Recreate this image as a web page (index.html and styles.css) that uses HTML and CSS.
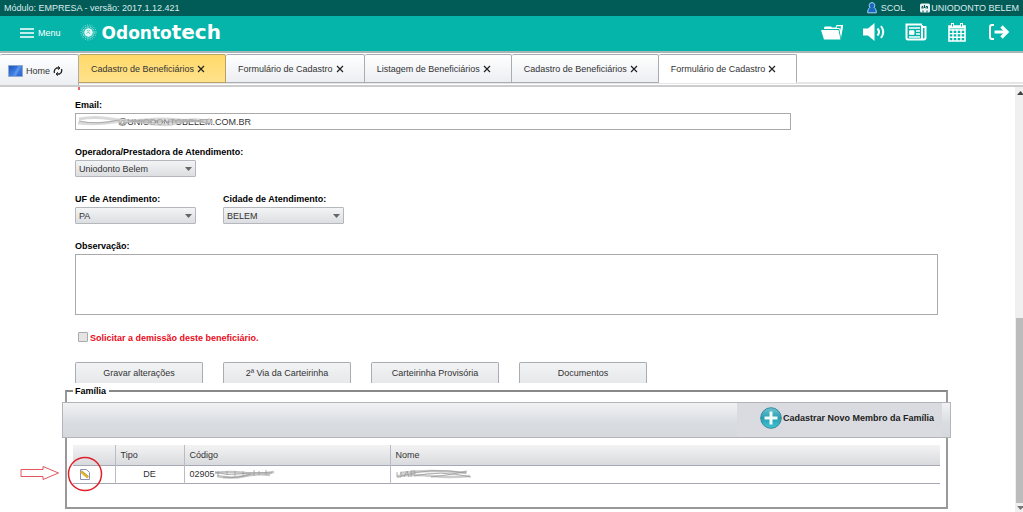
FILE: index.html
```html
<!DOCTYPE html>
<html lang="pt-BR">
<head>
<meta charset="utf-8">
<title>Odontotech</title>
<link rel="stylesheet" href="styles.css">
</head>
<body>
<div class="topbar">
  <span>Módulo: EMPRESA - versão: 2017.1.12.421</span>
  <div class="account">
    <span class="account-item">
      <svg width="10" height="12" viewBox="0 0 10 12"><path d="M5 .6a2.700 2.700 0 0 1 2 4.600C8.600 6.500 9.300 8.400 9.300 10.800H.7C.7 8.400 1.400 6.500 3 5.200A2.700 2.700 0 0 1 5 .6Z" fill="#1767c0" stroke="#a9d6f2"/></svg>
      SCOL
    </span>
    <span class="account-item tight">
      <svg width="10" height="10" viewBox="0 0 10 10"><rect y=".5" width="10" height="9" rx="1.500" fill="#e8f3f2"/><path d="M2 5.500V3.500h1v2M4.500 2v3M6 5.500V3.500h1.500v2M3 7.500v2M7 7.500v2" stroke="#01504c" fill="none"/></svg>
      UNIODONTO BELEM
    </span>
  </div>
</div>
<header class="header">
  <button class="menu" type="button">
    <svg width="14" height="10" viewBox="0 0 14 10"><path d="M0 1h14M0 5h14M0 9h14" stroke="#fff" stroke-width="1.600"/></svg>
    Menu
  </button>
  <div class="brand">
    <svg width="17" height="17" viewBox="0 0 17 17" fill="none" stroke="#fff"><circle cx="8.500" cy="8.500" r="7.500" stroke-dasharray="1 1.400" opacity=".6"/><circle cx="8.500" cy="8.500" r="5.600" stroke-dasharray="2 .7" opacity=".7"/><circle cx="8.500" cy="8.500" r="4.300" fill="#e5f8f6" stroke="none"/><path d="M7 6.500q1.500 1 3 0M6.800 9.500l1.500-1.500 2 2" stroke="#05b5aa" stroke-width=".6"/></svg>
    <span class="wordmark">Odonto<span class="wordmark-tail">tech</span></span>
  </div>
  <nav class="actions">
    <button type="button" aria-label="Pasta"><svg width="24" height="20" viewBox="0 0 24 20" fill="#fff"><path d="M1 8h17.500l2 9.500H4Z"/><path d="M4 7V5.500L5 4.500h6l1 1h3.500L16.500 3h6.500v2l-2 11L19.300 7Z"/><path d="M16.800 4.200h4.200L20.300 8l-.8-2h-2.700Z" fill="#05b5aa"/><path d="M3 7.500h16" stroke="#05b5aa" stroke-width=".6"/></svg></button>
    <button type="button" aria-label="Avisos"><svg width="24" height="20" viewBox="0 0 24 20" fill="#fff"><path d="M1 6.500h5L12.500 1v18L6 13.500H1Z"/><path d="M15.500 6.500q3 3.500 0 7M19 4q4.500 6 0 12" fill="none" stroke="#fff" stroke-width="2"/></svg></button>
    <button type="button" aria-label="Notícias"><svg width="24" height="20" viewBox="0 0 24 20" fill="none" stroke="#fff" stroke-width="2"><path d="M18 3v13q0 1.500 1.800 1.500 1.700 0 1.700-2V5H18M19 17.500H4q-1.500 0-1.500-1.500V2.500H18"/><path d="M5 6h11M12 9h4M12 12h4M5 15h11" stroke-width="1.500"/><path d="M5.500 8.800h4.500v3.500H5.500Z" fill="#fff" stroke-width="1"/></svg></button>
    <button type="button" aria-label="Calendário"><svg width="24" height="20" viewBox="0 0 24 20" fill="none" stroke="#fff"><path d="M3 4h16v15H3Z" stroke-width="1.600"/><path d="M3 8h16M3 11.600h16M3 15.200h16M7 7v12M11 7v12M15 7v12" stroke-width="1.400"/><path d="M3 4h16v2.500H3Z" fill="#fff" stroke="none"/><path d="M6.500 1v4M15.500 1v4" stroke-width="3"/><path d="M6.500 2v2.500M15.500 2v2.500" stroke="#05b5aa"/></svg></button>
    <button type="button" aria-label="Sair"><svg width="24" height="20" viewBox="0 0 24 20" fill="none" stroke="#fff" stroke-width="2"><path d="M6 3H4Q2 3 2 5v10q0 2 2 2h2"/><path d="M6.500 10h11" stroke-width="3"/><path d="M13.500 4.500 19 10l-5.500 5.500" stroke-width="3.200"/></svg></button>
  </nav>
</header>
<nav class="tabs">
  <button class="tab home" type="button">
    <svg width="15" height="12" viewBox="0 0 15 12"><defs><linearGradient id="scr" x2="1" y2="1"><stop stop-color="#1b52b8"/><stop offset=".55" stop-color="#3f7fe4"/><stop offset="1" stop-color="#2a5fc9"/></linearGradient></defs><path d="M.5.500h14v11H.5Z" fill="url(#scr)" stroke="#8fa9cf"/><path d="m5 11 5-10h3L8 11Z" fill="#78aaf2" opacity=".5"/></svg>
    Home
    <svg width="10" height="10" viewBox="0 0 10 10" fill="none" stroke="#222" stroke-width="1.300"><path d="M1.500 7Q.5 3.500 3.500 2H6M8.500 3q1 3.500-2 5H4"/><path d="m5 .3 2 1.700-2 1.700M5 6.300 3 8l2 1.700" stroke-width="1"/></svg>
  </button>
  <button class="tab marked" type="button">Cadastro de Beneficiários <svg class="x" viewBox="0 0 8 8"><path d="m1 1 6 6M7 1 1 7"/></svg></button>
  <button class="tab" type="button">Formulário de Cadastro <svg class="x" viewBox="0 0 8 8"><path d="m1 1 6 6M7 1 1 7"/></svg></button>
  <button class="tab" type="button">Listagem de Beneficiários <svg class="x" viewBox="0 0 8 8"><path d="m1 1 6 6M7 1 1 7"/></svg></button>
  <button class="tab" type="button">Cadastro de Beneficiários <svg class="x" viewBox="0 0 8 8"><path d="m1 1 6 6M7 1 1 7"/></svg></button>
  <button class="tab active" type="button">Formulário de Cadastro <svg class="x" viewBox="0 0 8 8"><path d="m1 1 6 6M7 1 1 7"/></svg></button>
</nav>
<div class="workspace">
  <form class="form">
    <span class="required"></span>
    <div class="field email">
      <label for="email">Email:</label>
      <div class="smudged">
        <input id="email" type="text" value="@UNIODONTOBELEM.COM.BR">
        <svg class="smudge-email" width="140" height="12" viewBox="0 0 140 12" fill="none"><path d="M2 4q16-3 32 0t34 1 34 0 34 1M1 8q20 2 36-1t34 1 32-1 33 1" stroke="#ccc" stroke-width="3" opacity=".75"/><path d="M2 6q18 4 40-1M45 9q20-6 38-3t50-2M50 5q24 4 44 1t38 3" stroke="#aaa" stroke-width="1"/></svg>
      </div>
    </div>
    <div class="field">
      <label for="operadora">Operadora/Prestadora de Atendimento:</label>
      <div class="select"><select id="operadora"><option>Uniodonto Belem</option></select><svg width="7" height="4" viewBox="0 0 7 4"><path d="M0 0h7L3.500 4Z"/></svg></div>
    </div>
    <div class="columns">
      <div class="field">
        <label for="uf">UF de Atendimento:</label>
        <div class="select"><select id="uf"><option>PA</option></select><svg width="7" height="4" viewBox="0 0 7 4"><path d="M0 0h7L3.500 4Z"/></svg></div>
      </div>
      <div class="field">
        <label for="cidade">Cidade de Atendimento:</label>
        <div class="select"><select id="cidade"><option>BELEM</option></select><svg width="7" height="4" viewBox="0 0 7 4"><path d="M0 0h7L3.500 4Z"/></svg></div>
      </div>
    </div>
    <div class="field">
      <label for="obs">Observação:</label>
      <textarea id="obs"></textarea>
    </div>
    <div class="dismissal">
      <input id="demissao" type="checkbox">
      <label for="demissao">Solicitar a demissão deste beneficiário.</label>
    </div>
    <div class="buttons">
      <button type="button">Gravar alterações</button>
      <button type="button">2ª Via da Carteirinha</button>
      <button type="button">Carteirinha Provisória</button>
      <button type="button">Documentos</button>
    </div>
    <fieldset class="family">
      <legend>Família</legend>
      <div class="toolbar">
        <button class="add" type="button">
          <svg width="22" height="22" viewBox="0 0 22 22"><defs><linearGradient id="ball" x2="0" y2="1"><stop stop-color="#70c3d3"/><stop offset=".5" stop-color="#279db3"/><stop offset="1" stop-color="#43c6d2"/></linearGradient></defs><circle cx="11" cy="11" r="10.300" fill="url(#ball)" stroke="#368b9c"/><path d="M11 4.500v13M4.500 11h13" stroke="#f0fbfc" stroke-width="3"/></svg>
          Cadastrar Novo Membro da Família
        </button>
      </div>
      <table class="members">
        <thead><tr><th class="col-edit"></th><th class="col-type">Tipo</th><th class="col-code">Código</th><th>Nome</th></tr></thead>
        <tbody><tr>
          <td class="edit">
            <button type="button" aria-label="Editar"><svg width="10" height="11" viewBox="0 0 10 11"><path d="M.5.500h6l3 3v7h-9Z" fill="#fff" stroke="#8b91b5"/><path d="m1 2.500 7 6" stroke="#e0b42c" stroke-width="2.600"/><path d="m1.500 1.500 7 6" stroke="#a08b45" stroke-width=".6"/></svg></button>
            <svg class="ring" width="36" height="36" viewBox="0 0 36 36"><circle cx="18" cy="18" r="16.500" fill="none" stroke="#e0202c" stroke-width="1.500"/></svg>
            <svg class="pointer" width="40" height="16" viewBox="0 0 40 16"><path d="M1 4.500h22V1.500L38.500 8 23 14.500V11.500H1Z" fill="#fff" stroke="#e5555d"/></svg>
          </td>
          <td class="type">DE</td>
          <td><span class="smudged">02905<svg width="60" height="12" viewBox="0 0 60 12" fill="none"><path d="M0 5q16-2 30 0t29-1M2 8q14 3 28 0t25-1" stroke="#c4c4c4" stroke-width="2.500"/><path d="M0 4q12 4 24 2t33-1M8 9q14 2 28-3M3 3v5M12 3v4M20 3v5M28 3v5M39 2v6M44 3v4M51 2v5" stroke="#999" stroke-width=".8"/></svg></span></td>
          <td><svg width="78" height="12" viewBox="0 0 78 12" fill="none"><path d="M1 8q18-2 35 0t38 0M4 5q30-4 66 0" stroke="#ccc" stroke-width="2.500"/><path d="M1 4v5h4V4M8 9l3-6 2 6M15 9V3h4v3h-4M5 8q28-9 66-3M18 8q26-6 57 1M35 9q20-2 36-6" stroke="#999" stroke-width=".8"/></svg></td>
        </tr></tbody>
      </table>
    </fieldset>
  </form>
  <div class="scrollbar">
    <svg width="8" height="14" viewBox="0 0 8 14"><path d="m2 8 3.500-4L9 8Z" fill="#444"/></svg>
    <div class="track"><div class="thumb"></div></div>
    <svg width="8" height="9" viewBox="0 0 8 9"><path d="m2 3 3.500 4L9 3Z" fill="#777"/></svg>
  </div>
</div>
</body>
</html>
```
FILE: styles.css
```css
* { box-sizing: border-box; }
body {
  margin: 0;
  height: 100vh;
  display: flex;
  flex-direction: column;
  overflow: hidden;
  background: #fff;
  color: #333;
  font: 9px/12px "Liberation Sans", Arial, sans-serif;
}
button, input, select, textarea { font: inherit; color: inherit; margin: 0; }
button { background: none; border: 0; padding: 0; }
svg { display: block; flex: none; }

.topbar {
  flex: none;
  display: flex;
  justify-content: space-between;
  align-items: center;
  height: 16px;
  padding: 0 4px 1px;
  background: #015c58;
  color: #dcebea;
}
.account { display: flex; gap: 15px; }
.account-item { display: flex; align-items: center; gap: 4px; }
.account-item.tight { gap: 1px; }

.header {
  flex: none;
  display: flex;
  align-items: center;
  height: 37px;
  padding: 0 11px 2px 20px;
  background: #05b5aa;
  border-bottom: 2px solid #a9b5b6;
  color: #fff;
}
.menu { display: flex; align-items: center; gap: 4px; }
.brand { display: flex; align-items: center; gap: 5px; margin-left: 19px; }
.wordmark { font: bold 17px/22px "DejaVu Sans", sans-serif; }
.wordmark-tail { font-size: 20px; }
.actions { display: flex; align-items: center; gap: 18px; margin-left: auto; padding-bottom: 2px; }

.tabs {
  flex: none;
  display: flex;
  align-items: flex-end;
  height: 34px;
  border-bottom: 2px solid #ccc;
  background: linear-gradient(#fff 29px, #e4e6e8 29px, #e4e6e8 31px, #fff 31px);
}
.tab {
  display: flex;
  align-items: center;
  gap: 3px;
  height: 29px;
  margin-bottom: 2px;
  padding: 0 20px 0 12px;
  border: 1px solid #a9adb1;
  border-left-width: 0;
  border-radius: 2px 2px 0 0;
  background: linear-gradient(#fff, #eceef2);
}
.tab.home { height: 31px; margin: 0; padding: 2px 15px 0 8px; border-bottom: 0; }
.tab.marked { background: linear-gradient(#ffd969, #ffe28c); border-color: #b9a164; }
.tab.active { background: #fff; border-bottom-color: #fff; }
.x { width: 8px; height: 8px; stroke: #222; stroke-width: 1.2px; fill: none; }

.workspace { flex: 1; min-height: 0; display: flex; }
.form { flex: 1; min-width: 0; padding: 12px 77px 0 75px; position: relative; }
.required { position: absolute; top: 0; left: 78px; width: 2px; height: 3px; background: #e66; }
.field { margin-bottom: 16px; }
label { color: #000; font-weight: bold; }
.field label { display: block; margin-bottom: 2px; }
.smudged { position: relative; display: block; }
.email input {
  display: block;
  width: 83%;
  height: 17px;
  padding: 0 4px 0 42px;
  border: 1px solid #aaa;
}
.smudge-email { position: absolute; left: 2px; top: 2px; }
.select { position: relative; width: 121px; }
.select select {
  display: block;
  width: 100%;
  height: 17px;
  padding: 0 16px 0 3px;
  appearance: none;
  border: 1px solid #b4b7bb;
  border-radius: 1px;
  background: linear-gradient(#f3f4f5, #dcdee1);
}
.select svg { position: absolute; right: 4px; top: 7px; fill: #666; pointer-events: none; }
.columns { display: flex; gap: 27px; }
textarea { display: block; width: 100%; height: 61px; border: 1px solid #aaa; resize: none; }

.dismissal { display: flex; align-items: center; gap: 2px; height: 14px; padding-left: 3px; }
.dismissal input { appearance: none; width: 10px; height: 10px; margin-bottom: 3px; border: 1px solid #aaa; border-radius: 1px; background: #e4e4e4; }
.dismissal label { color: #ea0a1c; }
.buttons { display: flex; gap: 20px; margin-top: 17px; }
.buttons button {
  width: 128px;
  height: 21px;
  border: 1px solid #a9adb1;
  border-bottom: 0;
  border-radius: 2px 2px 0 0;
  background: linear-gradient(#f2f3f5, #e6e8ea);
}

.family { margin: 2px -10px 0; padding: 0 6px 23px; min-width: 0; border: 2px solid #999; border-top-color: #888; }
.family legend { padding: 0 3px 0 2px; line-height: 12px; color: #000; font-weight: bold; }
.toolbar {
  display: flex;
  justify-content: flex-end;
  height: 36px;
  margin: 5px -11px 7px;
  padding-right: 8px;
  border: 1px solid #b2b4b8;
  background: linear-gradient(#f1f2f4, #d9dce0 60%, #d5d8dc);
}
.add { display: flex; align-items: center; gap: 1px; padding: 0 8px 4px 23px; background: #d9dbe0; color: #222; font-weight: bold; }
.members { width: 100%; border-collapse: collapse; table-layout: fixed; }
.members th { height: 20px; padding: 0 5px; text-align: left; font-weight: normal; background: linear-gradient(#f3f3f4, #d9dadd); }
.members td { height: 18px; padding: 0 5px; }
.members tr { border-bottom: 1px solid #a6a9b3; }
.members th + th, .members td + td { border-left: 1px solid #b9bcc4; }
.col-edit { width: 42px; }
.col-type { width: 69px; }
.col-code { width: 206px; }
.members .edit { position: relative; }
.edit button { display: block; margin-left: 2px; }
.members .type { text-align: center; }
.ring { position: absolute; left: -6px; top: -10px; }
.pointer { position: absolute; left: -53px; top: -1px; }
td .smudged { display: flex; align-items: center; }

.scrollbar { flex: none; display: flex; flex-direction: column; width: 8px; background: #f0f0f0; }
.track { flex: 1; display: flex; flex-direction: column; justify-content: flex-end; }
.thumb { height: 46%; background: #bcbcbc; margin-left: 1px; }
```
